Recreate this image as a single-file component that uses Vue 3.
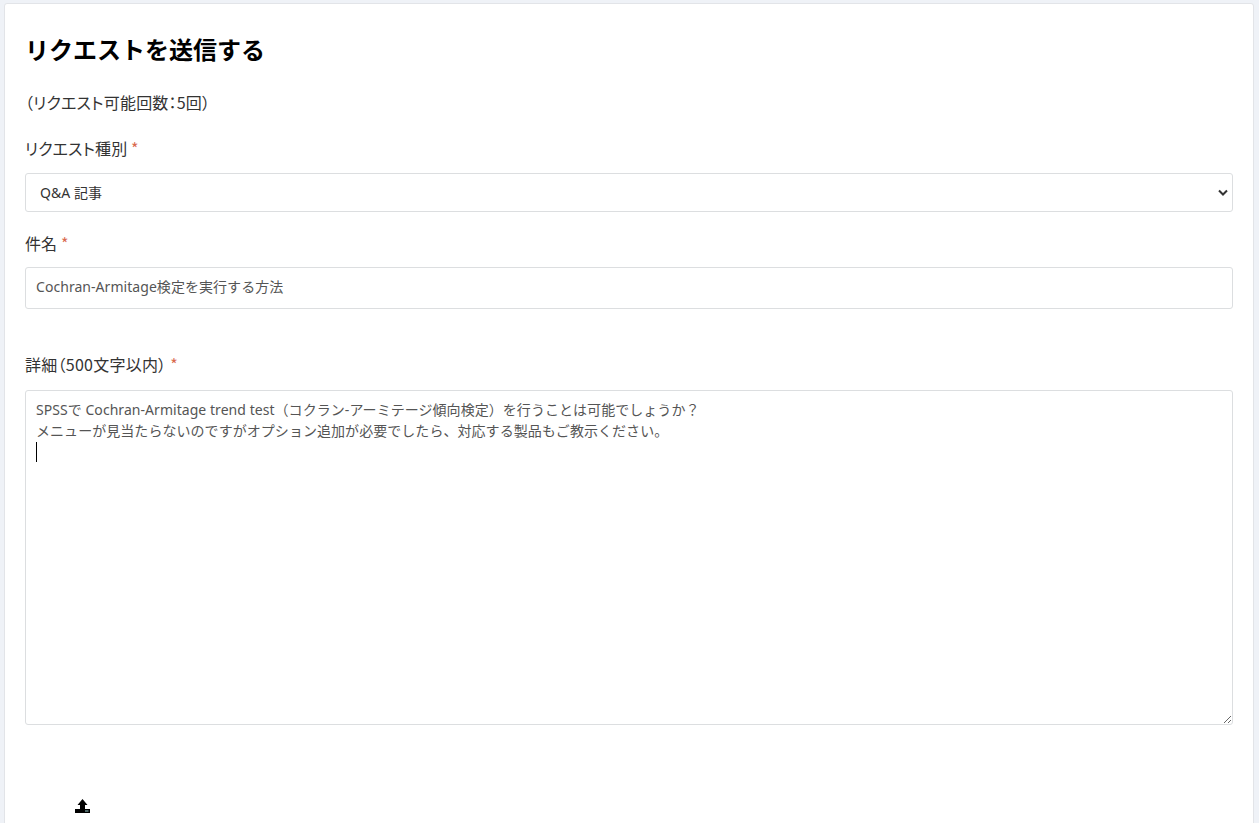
<script setup>
const detail = 'SPSSで Cochran-Armitage trend test（コクラン-アーミテージ傾向検定）を行うことは可能でしょうか？\nメニューが見当たらないのですがオプション追加が必要でしたら、対応する製品もご教示ください。\n'
</script>

<template>
  <div class="page">
    <form class="card" @submit.prevent>
      <h1 class="title">リクエストを送信する</h1>
      <p class="quota">（リクエスト可能回数：5回）</p>

      <label class="label first" for="kind">リクエスト種別 <span class="req">*</span></label>
      <select id="kind" class="select">
        <option>Q&amp;A 記事</option>
      </select>

      <label class="label subject" for="subject">件名 <span class="req">*</span></label>
      <input id="subject" class="input" type="text" value="Cochran-Armitage検定を実行する方法" />

      <label class="label detail" for="detail">詳細（500文字以内） <span class="req">*</span></label>
      <div class="area-wrap">
        <textarea id="detail" class="area" :value="detail"></textarea>
        <span class="caret"></span>
      </div>

      <div class="upload">
        <svg class="upload-icon" width="15" height="14" viewBox="0 0 15 14" aria-hidden="true">
          <path d="M7.5 0 L12.5 6 H10 V10 H5 V6 H2.5 Z" fill="#000" />
          <path d="M0 10 H15 V14 H0 Z" fill="#000" />
          <rect x="10" y="11.5" width="3.5" height="1" fill="#9cc" />
        </svg>
      </div>
    </form>
  </div>
</template>

<style>
html, body {
  margin: 0;
  background: #eff2f7;
  overflow: hidden;
}
</style>

<style scoped>
.page {
  height: 823px;
  overflow: hidden;
  padding: 3px 5px 0 4px;
  box-sizing: border-box;
  font-family: "Noto Sans", "Noto Sans CJK JP", sans-serif;
}
.card {
  background: #fff;
  border: 1px solid #e2e4e8;
  border-radius: 3px;
  padding: 0 20px 40px;
  height: 900px;
  box-sizing: border-box;
}
.title {
  margin: 0;
  padding-top: 28px;
  font-size: 24px;
  line-height: 34px;
  font-weight: 700;
  color: #000;
  font-family: "Noto Sans CJK JP", sans-serif;
}
.quota {
  margin: 0;
  padding-top: 25px;
  font-size: 16px;
  line-height: 22px;
  letter-spacing: 0.2px;
  color: #333;
  font-family: "Noto Sans CJK JP", sans-serif;
  font-feature-settings: "palt";
}
.label {
  display: block;
  font-size: 16px;
  line-height: 22px;
  letter-spacing: 0.1px;
  color: #333;
  font-family: "Noto Sans CJK JP", sans-serif;
  font-feature-settings: "palt";
}
.label.first { margin-top: 24px; margin-bottom: 14px; }
.label.subject { margin-top: 20px; margin-bottom: 13px; }
.label.detail { margin-top: 44px; margin-bottom: 15px; letter-spacing: 0.25px; }
.req { color: #d9694f; }
.select, .input, .area {
  display: block;
  width: 100%;
  box-sizing: border-box;
  background: #fff;
  border: 1px solid #dcdee0;
  border-radius: 3px;
  color: #555;
  font-family: "Noto Sans", "Noto Sans CJK JP", sans-serif;
  font-size: 14px;
  letter-spacing: 0.05px;
  outline: none;
  margin: 0;
}
.select {
  height: 39px;
  padding: 0 14px;
  color: #333;
  appearance: none;
  background-image: url("data:image/svg+xml,%3Csvg xmlns='http://www.w3.org/2000/svg' width='10' height='7' viewBox='0 0 10 7'%3E%3Cpath d='M1 1.5l4 4 4-4' fill='none' stroke='%23333' stroke-width='2'/%3E%3C/svg%3E");
  background-repeat: no-repeat;
  background-position: right 4px center;
}
.input {
  height: 42px;
  padding: 0 10px 4px;
}
.area-wrap {
  position: relative;
}
.area {
  height: 335px;
  padding: 8px 10px;
  line-height: 21px;
  resize: vertical;
}
.caret {
  position: absolute;
  left: 11px;
  top: 52px;
  width: 1px;
  height: 20px;
  background: #000;
}
.upload {
  margin-top: 74px;
  padding-left: 50px;
}
.upload-icon {
  display: block;
}
</style>
